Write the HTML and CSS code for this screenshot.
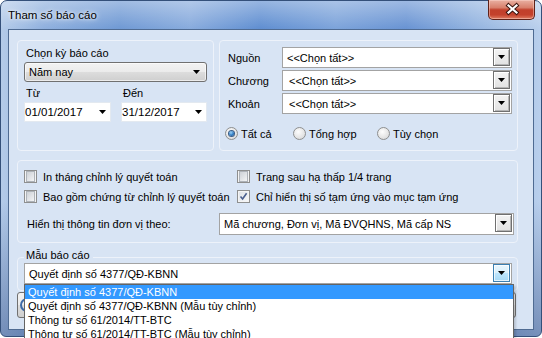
FILE: index.html
```html
<!DOCTYPE html>
<html lang="vi">
<head>
  <meta charset="UTF-8">
  <title>Tham số báo cáo</title>
  <link rel="stylesheet" href="styles.css">
</head>
<body>

  <div class="window">
    <div class="titlebar">
      <span class="title">Tham số báo cáo</span>
      <div class="close">
        <svg width="47" height="19" viewBox="0 0 47 19">
          <path d="M19.5 6.5 L27.5 13.5 M27.5 6.5 L19.5 13.5" stroke="#3b1510" stroke-width="4.2" stroke-linecap="square"/>
          <path d="M19.5 6.5 L27.5 13.5 M27.5 6.5 L19.5 13.5" stroke="#fff" stroke-width="2.2" stroke-linecap="square"/>
        </svg>
      </div>
    </div>

    <div class="client">
      <div class="top-row">
        <div class="box period">
          <div class="lbl">Chọn kỳ báo cáo</div>
          <div class="combo-btn"><span>Năm nay</span><i class="arrow"></i></div>
          <div class="dates">
            <div>
              <div class="lbl">Từ</div>
              <div class="datepick"><span>01/01/2017</span><i class="arrow"></i></div>
            </div>
            <div>
              <div class="lbl">Đến</div>
              <div class="datepick"><span>31/12/2017</span><i class="arrow"></i></div>
            </div>
          </div>
        </div>

        <div class="box filters">
          <div class="frow">
            <span class="flabel">Nguồn</span>
            <div class="combo"><span>&lt;&lt;Chọn tất&gt;&gt;</span><b class="dd"><i class="arrow"></i></b></div>
          </div>
          <div class="frow">
            <span class="flabel">Chương</span>
            <div class="combo shift"><span>&lt;&lt;Chọn tất&gt;&gt;</span><b class="dd"><i class="arrow"></i></b></div>
          </div>
          <div class="frow">
            <span class="flabel">Khoản</span>
            <div class="combo shift"><span>&lt;&lt;Chọn tất&gt;&gt;</span><b class="dd"><i class="arrow"></i></b></div>
          </div>
          <div class="radios">
            <span class="radio-item w1"><i class="radio on"></i>Tất cả</span>
            <span class="radio-item w2"><i class="radio"></i>Tổng hợp</span>
            <span class="radio-item"><i class="radio"></i>Tùy chọn</span>
          </div>
        </div>
      </div>

      <div class="box options">
        <div class="checks">
          <span class="check-item"><i class="chk"></i>In tháng chỉnh lý quyết toán</span>
          <span class="check-item"><i class="chk"></i>Trang sau hạ thấp 1/4 trang</span>
          <span class="check-item"><i class="chk"></i>Bao gồm chứng từ chỉnh lý quyết toán</span>
          <span class="check-item"><i class="chk on">
            <svg width="9" height="9" viewBox="0 0 9 9"><path d="M1.5 4.5 L3.6 7 L7.6 1.2" stroke="#4a5f8e" stroke-width="1.6" fill="none"/></svg>
          </i>Chỉ hiển thị số tạm ứng vào mục tạm ứng</span>
        </div>
        <div class="unit-row">
          <span class="unit-label">Hiển thị thông tin đơn vị theo:</span>
          <div class="combo unit"><span>Mã chương, Đơn vị, Mã ĐVQHNS, Mã cấp NS</span><b class="dd"><i class="arrow"></i></b></div>
        </div>
      </div>

      <div class="tpl-label">Mẫu báo cáo</div>
      <div class="box tpl">
        <div class="combo tpl-combo">
          <span>Quyết định số 4377/QĐ-KBNN</span><b class="dd hot"><i class="arrow"></i></b>
          <ul class="droplist">
            <li class="sel">Quyết định số 4377/QĐ-KBNN</li>
            <li>Quyết định số 4377/QĐ-KBNN (Mẫu tùy chỉnh)</li>
            <li>Thông tư số 61/2014/TT-BTC</li>
            <li>Thông tư số 61/2014/TT-BTC (Mẫu tùy chỉnh)</li>
          </ul>
        </div>
      </div>

      <!-- nut bi che boi danh sach -->
      <div class="buttons">
        <div class="wbtn"><i class="wicon"></i></div>
        <div class="wbtn"></div>
      </div>
    </div>
  </div>

</body>
</html>
```

FILE: styles.css
```css
* {
  box-sizing: border-box;
}

html, body {
  margin: 0;
  overflow: hidden;
  background: #fff;
}

body {
  width: 542px;
  height: 338px;
  font-family: "Liberation Sans", Arial, sans-serif;
  font-size: 11px;
  color: #000;
}

.window {
  width: 542px;
  height: 337px;
  border: 1px solid #34507a;
  border-radius: 7px 7px 6px 6px;
  background:
    linear-gradient(to bottom, rgba(255,255,255,0.35), rgba(255,255,255,0) 28px, rgba(0,0,0,0) 200px, rgba(20,50,110,0.4)),
    linear-gradient(90deg, #b4cbe9 0%, #8fb0de 8%, #6f99d4 22%, #88abdd 35%, #5f8ed1 48%, #7ca3da 62%, #6893d3 75%, #9ab9e2 90%, #b9cfec 100%);
}

.titlebar {
  height: 28px;
  display: flex;
  justify-content: space-between;
  padding-left: 7px;
}

.title {
  line-height: 28px;
  font-size: 11.5px;
  text-shadow: 0 0 6px #fff, 0 0 3px rgba(255,255,255,0.8);
}

.close {
  width: 47px;
  height: 20px;
  margin-top: -1px;
  margin-right: 6px;
  border: 1px solid #5e2219;
  border-top: none;
  border-radius: 0 0 5px 5px;
  background: linear-gradient(to bottom, #e9b0a2 0%, #d8806c 40%, #c1402b 52%, #c4412c 78%, #df7d62 100%);
  box-shadow: inset 0 0 0 1px rgba(255,220,210,0.45);
}

.close svg {
  display: block;
  margin-top: -1px;
}

.client {
  margin: 0 7px;
  height: 301px;
  border: 1px solid #4f6b92;
  background: #d8e4f4;
  padding: 10px 15px 0 8px;
}

.box {
  border: 1px solid #edf2fa;
  border-radius: 4px;
}

.top-row {
  display: flex;
  gap: 5px;
  height: 111px;
}

.lbl {
  height: 13px;
  line-height: 13px;
  padding-left: 2px;
}

.arrow {
  display: block;
  width: 7px;
  height: 4px;
  background: #000;
  clip-path: polygon(0 0, 100% 0, 50% 100%);
}

/* ky bao cao */
.period {
  width: 197px;
  padding: 6px 6px 0 6px;
}

.combo-btn {
  margin-top: 2px;
  height: 20px;
  border: 1px solid #707070;
  border-radius: 3px;
  background: linear-gradient(to bottom, #f2f2f2 0%, #ebebeb 50%, #dddddd 50%, #cfcfcf 100%);
  box-shadow: inset 0 0 0 1px rgba(255,255,255,0.6);
  display: flex;
  align-items: center;
  justify-content: space-between;
  padding: 0 6px 0 4px;
}

.dates {
  margin-top: 5px;
  display: grid;
  grid-template-columns: 87px 86px;
  gap: 10px;
}

.datepick {
  margin-top: 2px;
  height: 20px;
  background: #fff;
  border: 1px solid #e3e9f0;
  display: flex;
  align-items: center;
  justify-content: space-between;
  padding: 0 4px 0 0;
  font-size: 11.5px;
}

/* nguon / chuong / khoan */
.filters {
  flex: 1;
  padding: 6px 5px 0 8px;
}

.frow {
  display: flex;
  align-items: center;
  height: 21px;
  margin-bottom: 2px;
}

.flabel {
  width: 54px;
}

.combo {
  position: relative;
  flex: 1;
  height: 21px;
  background: #fff;
  border: 1px solid #a3a3a3;
  display: flex;
  align-items: center;
  justify-content: space-between;
  padding-left: 4px;
}

.combo.shift {
  padding-left: 6px;
}

.dd {
  width: 17px;
  height: 18px;
  margin-right: 1px;
  align-self: flex-start;
  border: 1px solid #707070;
  background: linear-gradient(to bottom, #f3f3f3, #e2e2e2);
  box-shadow: inset 1px 1px 0 #fff, inset -1px -1px 0 #b5b5b5;
  display: flex;
  align-items: center;
  justify-content: center;
}

.radios {
  display: flex;
  align-items: center;
  margin: 13px 0 0 -3px;
  height: 13px;
}

.radio-item {
  display: flex;
  align-items: center;
  gap: 3px;
}

.radio-item.w1 {
  width: 68px;
}

.radio-item.w2 {
  width: 84px;
}

.radio {
  width: 13px;
  height: 13px;
  border-radius: 50%;
  border: 1px solid #8e8f8f;
  background: radial-gradient(circle at 40% 35%, #fdfdfd 0%, #e4e4e4 60%, #cfd2d6 100%);
  display: flex;
  align-items: center;
  justify-content: center;
}

.radio.on::after {
  content: "";
  width: 5px;
  height: 5px;
  border-radius: 50%;
  background: radial-gradient(circle at 40% 35%, #9fd4f7 0%, #2e7bc4 55%, #17457b 100%);
  box-shadow: 0 0 0 1px #3b5d86;
}

/* tuy chon */
.options {
  margin-top: 9px;
  height: 83px;
  padding: 9px 3px 0 6px;
}

.checks {
  display: grid;
  grid-template-columns: 213px 1fr;
  row-gap: 7px;
}

.check-item {
  display: flex;
  align-items: center;
  gap: 6px;
  height: 13px;
}

.chk {
  width: 13px;
  height: 13px;
  border: 1px solid #8e8f8f;
  background: #f4f4f4;
  padding: 1px;
  display: flex;
  align-items: center;
  justify-content: center;
}

.chk::before {
  content: "";
  width: 9px;
  height: 9px;
  background: linear-gradient(135deg, #cdd1d6, #f3f4f5);
  border: 1px solid #aeb3b9;
}

.chk.on::before {
  display: none;
}

.chk svg {
  display: block;
  background: linear-gradient(135deg, #dfe3e8, #f6f7f8);
}

.unit-row {
  display: flex;
  align-items: center;
  margin-top: 10px;
}

.unit-label {
  width: 195px;
  padding-left: 3px;
}

.combo.unit {
  height: 22px;
}

/* mau bao cao */
.tpl-label {
  position: relative;
  z-index: 1;
  display: inline-block;
  margin: 6px 0 0 7px;
  padding: 0 3px 0 2px;
  height: 13px;
  line-height: 13px;
  background: #d8e4f4;
}

.tpl {
  margin-top: -5px;
  padding: 5px 5px 6px 6px;
}

.tpl-combo {
  height: 21px;
}

.dd.hot {
  border-color: #3c7fb1;
  background: linear-gradient(to bottom, #eaf6fd 0%, #d9f0fc 50%, #bee6fd 50%, #a7d9f5 100%);
  box-shadow: inset 0 0 0 1px rgba(255,255,255,0.7);
}

.droplist {
  position: absolute;
  z-index: 10;
  left: -1px;
  top: 20px;
  width: 490px;
  margin: 0;
  padding: 0;
  list-style: none;
  background: #fff;
  border: 1px solid #646464;
  box-shadow: 2px 2px 2px rgba(0,0,0,0.15);
}

.droplist li {
  height: 14px;
  line-height: 14px;
  padding-left: 3px;
  white-space: nowrap;
}

.droplist li.sel {
  background: #3399ff;
  color: #fff;
}

.buttons {
  display: flex;
  justify-content: space-between;
  margin-top: 1px;
  padding-right: 2px;
}

.wbtn {
  width: 96px;
  height: 26px;
  border: 1px solid #707070;
  border-radius: 3px;
  background: linear-gradient(to bottom, #f2f2f2 0%, #ebebeb 50%, #dddddd 50%, #cfcfcf 100%);
  display: flex;
  align-items: center;
  padding-left: 2px;
}

.wicon {
  width: 14px;
  height: 14px;
  border-radius: 50%;
  border: 2px solid #3d6aa8;
}
```
